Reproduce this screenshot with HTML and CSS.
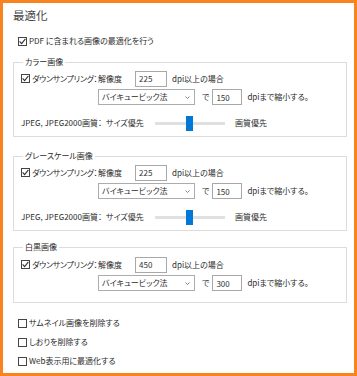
FILE: index.html
```html
<!DOCTYPE HTML>
<html>
	<head>
		<title>最適化</title>
		<meta charset="utf-8">
		<link rel="stylesheet" href="styles.css">
	</head>
	<body>
		<div class="panel">
			<h1 class="title">最適化</h1>

			<label class="opt opt-pdf">
				<span class="cb"><svg width="7" height="7" viewBox="0 0 7 7"><path d="M0.6 3.4 L2.6 5.6 L6.4 0.9" /></svg></span>PDF に含まれる画像の最適化を行う
			</label>

			<fieldset class="sec sec-color">
				<legend>カラー画像</legend>
				<div class="row">
					<label class="lead"><span class="cb"><svg width="7" height="7" viewBox="0 0 7 7"><path d="M0.6 3.4 L2.6 5.6 L6.4 0.9" /></svg></span>ダウンサンプリング：</label>
					<span class="lbl">解像度</span>
					<input class="num" type="text" value="225">
					<span>dpi以上の場合</span>
				</div>
				<div class="row row-sel">
					<div class="sel">バイキュービック法<svg width="5" height="3" viewBox="0 0 5 3"><path d="M0.5 0.5 L2.5 2.5 L4.5 0.5" /></svg></div>
					<span class="de">で</span>
					<input class="num num-s" type="text" value="150">
					<span>dpiまで縮小する。</span>
				</div>
				<div class="row row-q">
					<span class="qlbl">JPEG, JPEG2000画質：<span class="gap"></span>サイズ優先</span>
					<span class="track"><span class="thumb"></span></span>
					<span class="best">画質優先</span>
				</div>
			</fieldset>

			<fieldset class="sec sec-gray">
				<legend>グレースケール画像</legend>
				<div class="row">
					<label class="lead"><span class="cb"><svg width="7" height="7" viewBox="0 0 7 7"><path d="M0.6 3.4 L2.6 5.6 L6.4 0.9" /></svg></span>ダウンサンプリング：</label>
					<span class="lbl">解像度</span>
					<input class="num" type="text" value="225">
					<span>dpi以上の場合</span>
				</div>
				<div class="row row-sel">
					<div class="sel">バイキュービック法<svg width="5" height="3" viewBox="0 0 5 3"><path d="M0.5 0.5 L2.5 2.5 L4.5 0.5" /></svg></div>
					<span class="de">で</span>
					<input class="num num-s" type="text" value="150">
					<span>dpiまで縮小する。</span>
				</div>
				<div class="row row-q">
					<span class="qlbl">JPEG, JPEG2000画質：<span class="gap"></span>サイズ優先</span>
					<span class="track"><span class="thumb"></span></span>
					<span class="best">画質優先</span>
				</div>
			</fieldset>

			<fieldset class="sec sec-mono">
				<legend>白黒画像</legend>
				<div class="row">
					<label class="lead"><span class="cb"><svg width="7" height="7" viewBox="0 0 7 7"><path d="M0.6 3.4 L2.6 5.6 L6.4 0.9" /></svg></span>ダウンサンプリング：</label>
					<span class="lbl">解像度</span>
					<input class="num" type="text" value="450">
					<span>dpi以上の場合</span>
				</div>
				<div class="row row-sel">
					<div class="sel">バイキュービック法<svg width="5" height="3" viewBox="0 0 5 3"><path d="M0.5 0.5 L2.5 2.5 L4.5 0.5" /></svg></div>
					<span class="de">で</span>
					<input class="num num-s" type="text" value="300">
					<span>dpiまで縮小する。</span>
				</div>
			</fieldset>

			<label class="opt opt-first"><span class="cb"></span>サムネイル画像を削除する</label>
			<label class="opt"><span class="cb"></span>しおりを削除する</label>
			<label class="opt"><span class="cb"></span>Web表示用に最適化する</label>
		</div>
	</body>
</html>
```

FILE: styles.css
```css
*{ margin:0; padding:0; box-sizing:border-box;}
body{
	background:#fff;
	font-family:"Noto Sans CJK JP", "Noto Sans", sans-serif;
	font-size:8px;
	line-height:12px;
	color:#2b2b2b;
	font-feature-settings:"palt";
	white-space:nowrap;
}
.panel{
	width:357px;
	height:376px;
	border:3px solid #f7841f;
	padding:5px 0 0 10px;
	overflow:hidden;
}
.title{
	font-size:11.5px;
	line-height:14px;
	font-weight:normal;
	color:#444;
}

/* checkbox rows */
.opt{
	display:flex;
	align-items:center;
	height:12px;
	margin:7px 0 0 5px;
}
.opt-pdf{ margin-top:13px;}
.opt-first{ margin-top:14px;}
.cb{
	display:block;
	flex:none;
	width:9px;
	height:9px;
	border:1px solid #444;
	background:#fff;
	margin-right:2px;
}
.cb svg{ display:block;}
.cb path{
	fill:none;
	stroke:#333;
	stroke-width:1.1;
}

/* group boxes */
.sec{
	width:334px;
	border:1px solid #dcdcdc;
	padding:2px 0 6px 7px;
}
.sec legend{
	margin-left:2px;
	padding:0 2px;
	line-height:12px;
}
.sec-color{ margin-top:9px;}
.sec-gray{ margin-top:13px;}
.sec-mono{ margin-top:10px; padding:3px 0 11px 7px;}

.row{
	display:flex;
	align-items:center;
	height:17px;
}
.lead{
	display:flex;
	align-items:center;
	flex:none;
	width:77px;
	letter-spacing:-0.3px;
}
.lbl{ width:37px; flex:none;}
.num{
	flex:none;
	width:32px;
	height:16px;
	border:1px solid #a8a8a8;
	background:#fff;
	font:inherit;
	color:#333;
	padding-left:3px;
	margin-right:5px;
	outline:none;
}
.num-s{ width:30px;}

.row-sel{
	height:16px;
	margin-top:2px;
	padding-left:77px;
}
.sel{
	display:flex;
	align-items:center;
	justify-content:space-between;
	flex:none;
	width:97px;
	height:16px;
	border:1px solid #acacac;
	background:#fff;
	padding:0 4px 0 3px;
}
.sel path{
	fill:none;
	stroke:#777;
	stroke-width:0.9;
}
.de{ margin:0 3px 0 7px;}

/* quality slider */
.row-q{
	height:14px;
	margin-top:11px;
}
.qlbl{ width:134px; flex:none;}
.gap{ display:inline-block; width:4px;}
.track{
	position:relative;
	flex:none;
	width:70px;
	height:3px;
	background:#e0e0e0;
}
.thumb{
	position:absolute;
	left:31px;
	top:-6px;
	width:7px;
	height:15px;
	background:#0078d7;
}
.best{ margin-left:10px;}
```
